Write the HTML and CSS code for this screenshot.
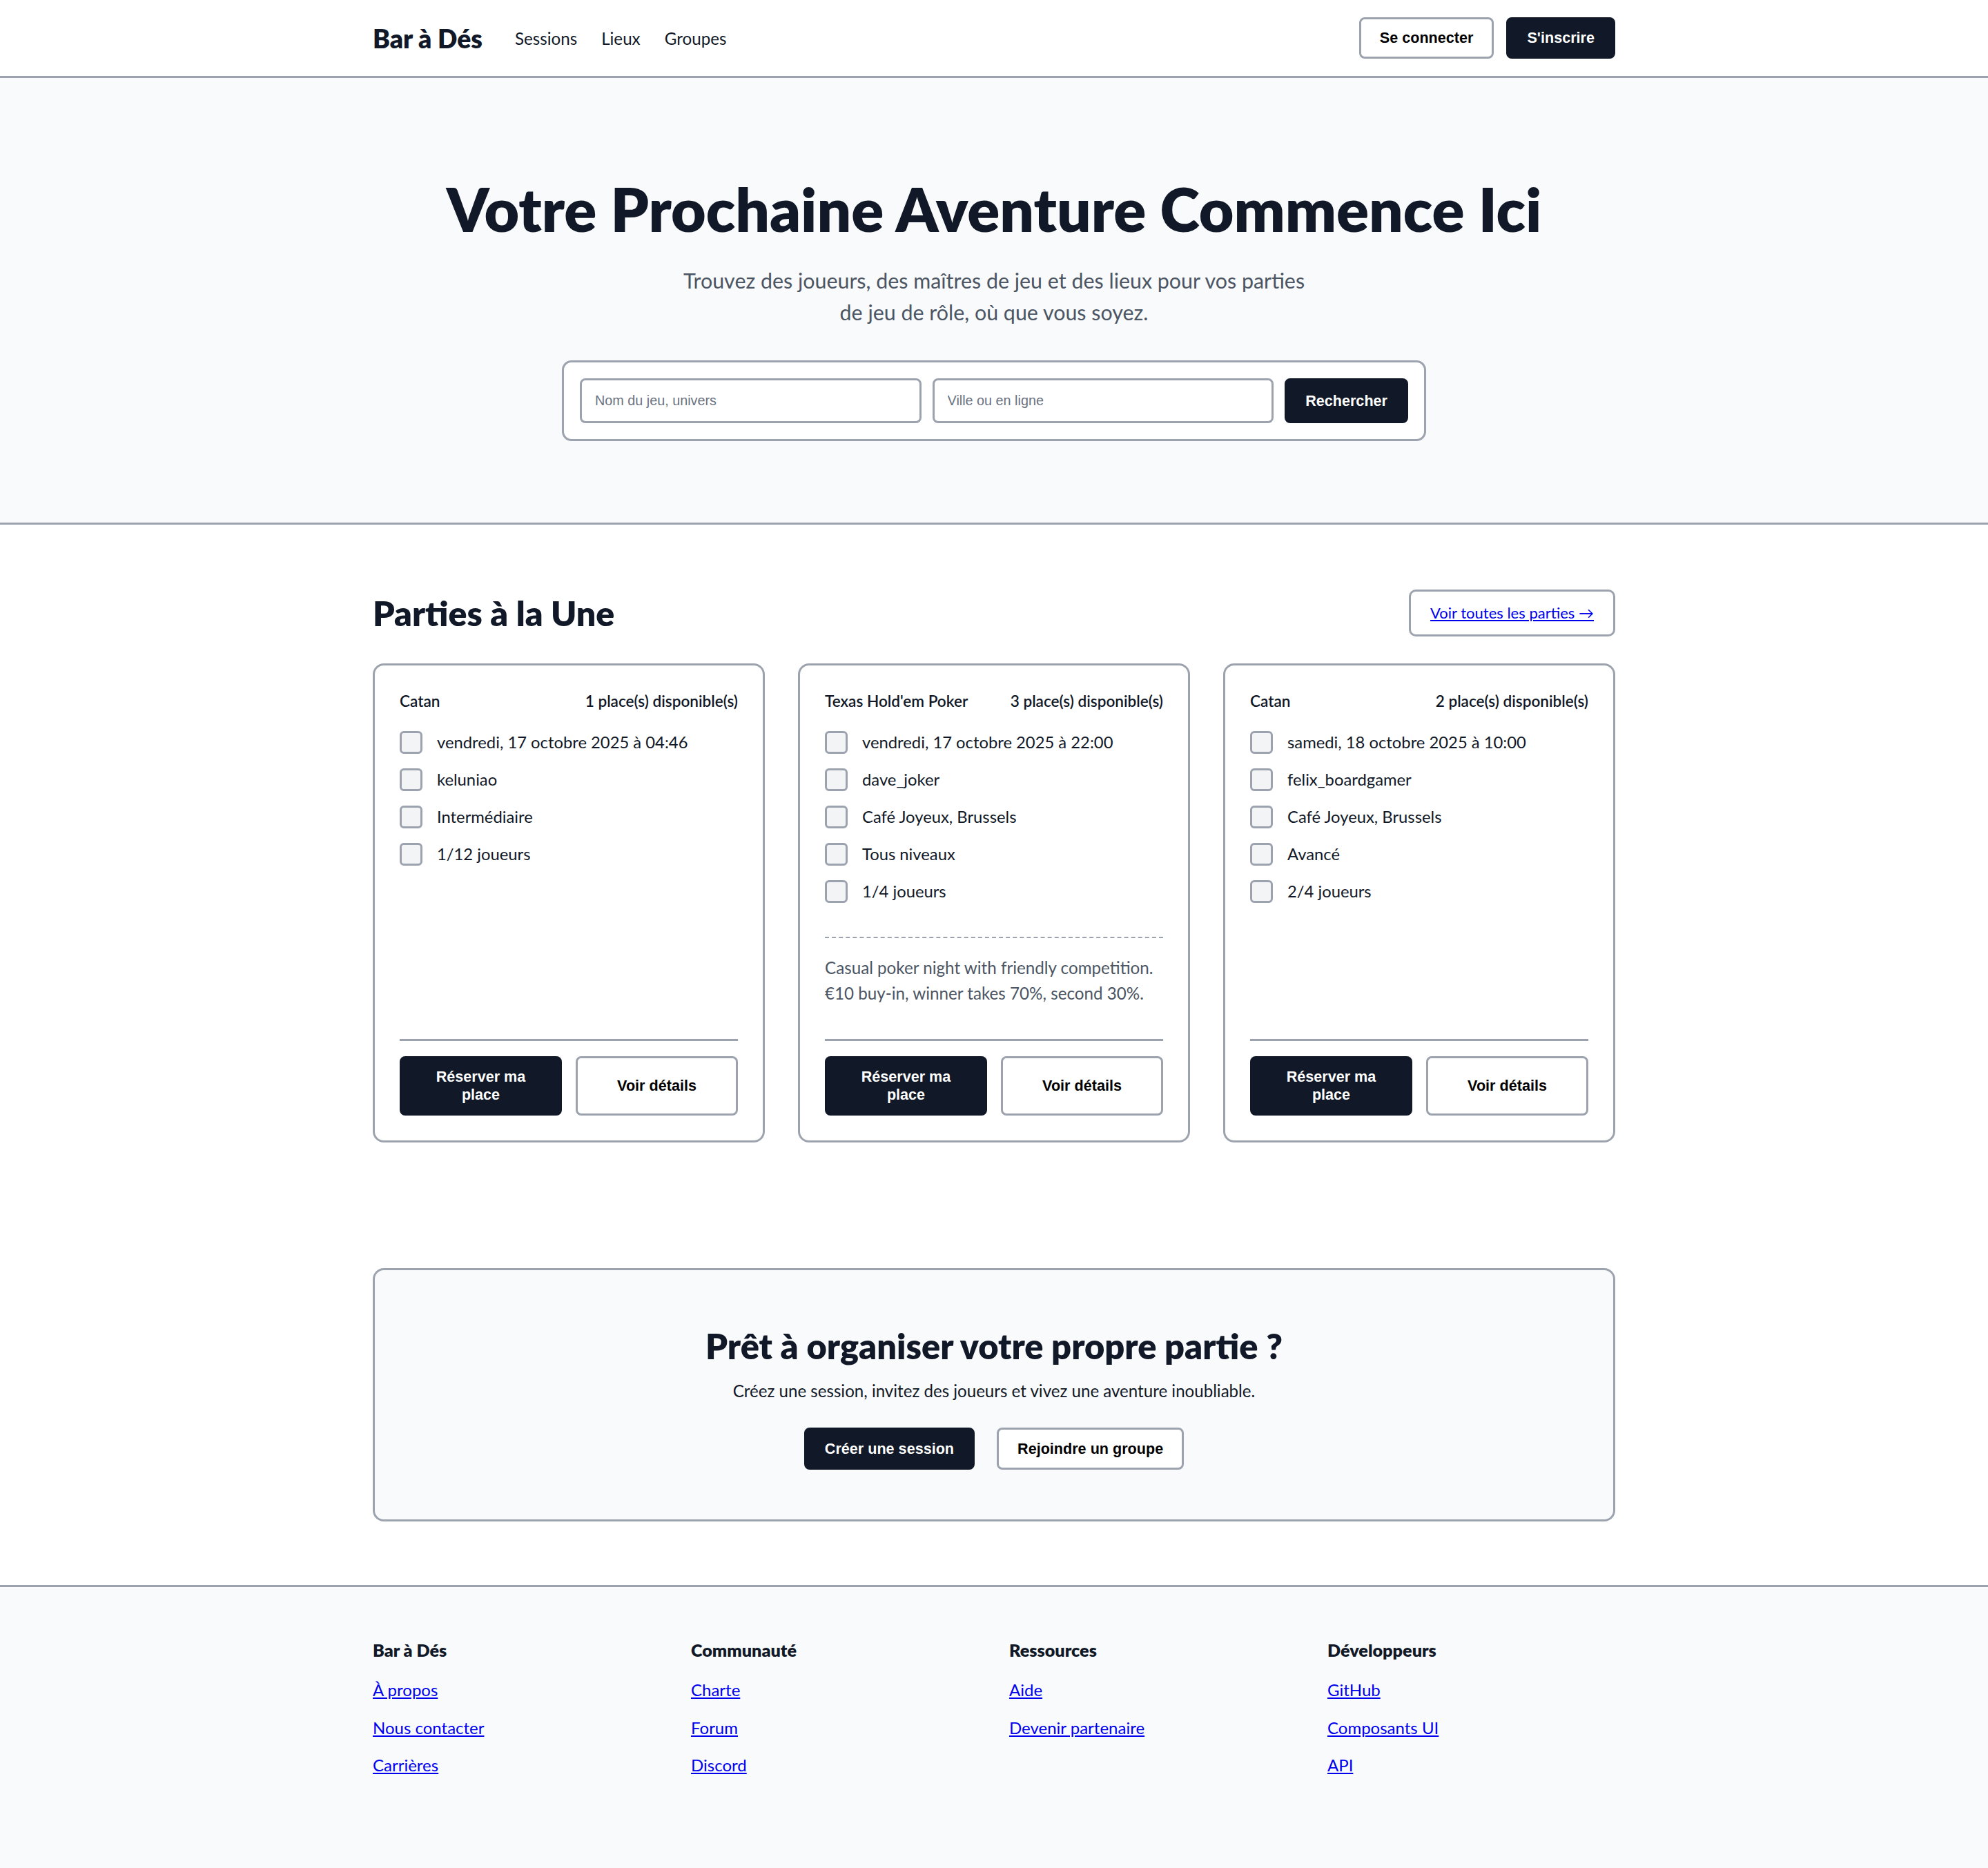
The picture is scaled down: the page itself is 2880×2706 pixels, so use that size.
FILE: index.html
```html
<!DOCTYPE html>
<html lang="fr">
<head>
<meta charset="utf-8">
<title>Bar à Dés</title>
<link rel="stylesheet" href="styles.css">
</head>
<body>
<header class="topbar">
  <div class="wrap topbar-inner">
    <div class="brand-nav">
      <a class="brand" href="#">Bar à Dés</a>
      <nav class="mainnav">
        <a href="#">Sessions</a>
        <a href="#">Lieux</a>
        <a href="#">Groupes</a>
      </nav>
    </div>
    <div class="auth">
      <button class="btn btn-outline" type="button">Se connecter</button>
      <button class="btn btn-dark" type="button">S'inscrire</button>
    </div>
  </div>
</header>

<section class="hero">
  <h1>Votre Prochaine Aventure Commence Ici</h1>
  <p class="lead">Trouvez des joueurs, des maîtres de jeu et des lieux pour vos parties de jeu de rôle, où que vous soyez.</p>
  <form class="search">
    <input type="text" placeholder="Nom du jeu, univers">
    <input type="text" placeholder="Ville ou en ligne">
    <button class="btn btn-dark" type="button">Rechercher</button>
  </form>
</section>

<main class="wrap featured">
  <div class="featured-head">
    <h2 class="section-title">Parties à la Une</h2>
    <div class="see-all"><a href="#">Voir toutes les parties →</a></div>
  </div>

  <div class="cards">
    <article class="card">
      <div class="card-body">
        <div class="card-head"><span>Catan</span><span>1 place(s) disponible(s)</span></div>
        <ul class="facts">
          <li><span class="box"></span>vendredi, 17 octobre 2025 à 04:46</li>
          <li><span class="box"></span>keluniao</li>
          <li><span class="box"></span>Intermédiaire</li>
          <li><span class="box"></span>1/12 joueurs</li>
        </ul>
      </div>
      <div class="card-foot">
        <button class="btn btn-dark" type="button">Réserver ma place</button>
        <button class="btn btn-outline" type="button">Voir détails</button>
      </div>
    </article>

    <article class="card">
      <div class="card-body">
        <div class="card-head"><span>Texas Hold'em Poker</span><span>3 place(s) disponible(s)</span></div>
        <ul class="facts">
          <li><span class="box"></span>vendredi, 17 octobre 2025 à 22:00</li>
          <li><span class="box"></span>dave_joker</li>
          <li><span class="box"></span>Café Joyeux, Brussels</li>
          <li><span class="box"></span>Tous niveaux</li>
          <li><span class="box"></span>1/4 joueurs</li>
        </ul>
        <p class="desc">Casual poker night with friendly competition. €10 buy-in, winner takes 70%, second 30%.</p>
      </div>
      <div class="card-foot">
        <button class="btn btn-dark" type="button">Réserver ma place</button>
        <button class="btn btn-outline" type="button">Voir détails</button>
      </div>
    </article>

    <article class="card">
      <div class="card-body">
        <div class="card-head"><span>Catan</span><span>2 place(s) disponible(s)</span></div>
        <ul class="facts">
          <li><span class="box"></span>samedi, 18 octobre 2025 à 10:00</li>
          <li><span class="box"></span>felix_boardgamer</li>
          <li><span class="box"></span>Café Joyeux, Brussels</li>
          <li><span class="box"></span>Avancé</li>
          <li><span class="box"></span>2/4 joueurs</li>
        </ul>
      </div>
      <div class="card-foot">
        <button class="btn btn-dark" type="button">Réserver ma place</button>
        <button class="btn btn-outline" type="button">Voir détails</button>
      </div>
    </article>
  </div>

  <section class="cta">
    <h2 class="cta-title">Prêt à organiser votre propre partie ?</h2>
    <p class="cta-text">Créez une session, invitez des joueurs et vivez une aventure inoubliable.</p>
    <div class="cta-actions">
      <button class="btn btn-dark" type="button">Créer une session</button>
      <button class="btn btn-outline" type="button">Rejoindre un groupe</button>
    </div>
  </section>
</main>

<footer class="footer">
  <div class="wrap footer-grid">
    <div class="fcol">
      <h3>Bar à Dés</h3>
      <a href="#">À propos</a>
      <a href="#">Nous contacter</a>
      <a href="#">Carrières</a>
    </div>
    <div class="fcol">
      <h3>Communauté</h3>
      <a href="#">Charte</a>
      <a href="#">Forum</a>
      <a href="#">Discord</a>
    </div>
    <div class="fcol">
      <h3>Ressources</h3>
      <a href="#">Aide</a>
      <a href="#">Devenir partenaire</a>
    </div>
    <div class="fcol">
      <h3>Développeurs</h3>
      <a href="#">GitHub</a>
      <a href="#">Composants UI</a>
      <a href="#">API</a>
    </div>
  </div>
</footer>
</body>
</html>
```

FILE: styles.css
```css
* { box-sizing: border-box; }

body {
  margin: 0;
  font-family: Lato, "Noto Sans", sans-serif;
  color: #111827;
  background: #ffffff;
}

.wrap {
  max-width: 1800px;
  margin: 0 auto;
}

/* ---------- top bar ---------- */
.topbar {
  background: #ffffff;
  border-bottom: 3px solid #9ca3af;
}
.topbar-inner {
  height: 110px;
  display: flex;
  align-items: center;
  justify-content: space-between;
}
.brand-nav {
  display: flex;
  align-items: center;
}
.brand {
  font-size: 37.3px;
  font-weight: 800;
  color: #111827;
  text-decoration: none;
}
.mainnav {
  display: flex;
  gap: 35px;
  margin-left: 47px;
}
.mainnav a {
  font-size: 24.2px;
  color: #111827;
  text-decoration: none;
}
.auth {
  display: flex;
  gap: 18px;
}

/* ---------- buttons ---------- */
.btn {
  font-family: "Liberation Sans", Arial, sans-serif;
  font-weight: 700;
  font-size: 21.6px;
  line-height: 26px;
  padding: 14px 27px;
  border: 3px solid #9ca3af;
  border-radius: 8px;
  cursor: pointer;
}
.btn-dark {
  background: #111827;
  border-color: #111827;
  color: #ffffff;
}
.btn-outline {
  background: #ffffff;
  color: #000000;
}

/* ---------- hero ---------- */
.hero {
  background: #f9fafb;
  border-bottom: 3px solid #9ca3af;
  text-align: center;
  padding: 137px 0 118px;
}
.hero h1 {
  margin: 0;
  font-size: 87.3px;
  line-height: 105px;
  font-weight: 800;
  color: #111827;
}
.lead {
  max-width: 920px;
  margin: 28px auto 0;
  font-size: 30.4px;
  line-height: 46px;
  color: #4b5563;
}
.search {
  width: 1252px;
  margin: 47px auto 0;
  padding: 23px;
  display: flex;
  gap: 16px;
  background: #ffffff;
  border: 3px solid #9ca3af;
  border-radius: 14px;
}
.search input {
  flex: 1;
  min-width: 0;
  height: 65px;
  padding: 0 19px;
  border: 3px solid #9ca3af;
  border-radius: 8px;
  background: #ffffff;
  font-family: "Liberation Sans", Arial, sans-serif;
  font-size: 19.8px;
  color: #111827;
}
.search input::placeholder {
  color: #6b7280;
}
.search .btn {
  flex: none;
}

/* ---------- featured ---------- */
.featured {
  padding: 94px 0 92px;
}
.featured-head {
  display: flex;
  align-items: center;
  justify-content: space-between;
}
.section-title {
  margin: 0;
  font-size: 50px;
  line-height: 62px;
  font-weight: 800;
}
.see-all {
  background: #ffffff;
  border: 3px solid #9ca3af;
  border-radius: 10px;
  padding: 14px 28px;
}
.see-all a {
  font-size: 22px;
  line-height: 34px;
  color: #0000ee;
}

.cards {
  margin-top: 39px;
  display: grid;
  grid-template-columns: repeat(3, 1fr);
  gap: 48px;
}
.card {
  display: flex;
  flex-direction: column;
  background: #ffffff;
  border: 3px solid #9ca3af;
  border-radius: 16px;
  padding: 36px;
}
.card-body {
  flex: 1;
  padding-bottom: 48px;
}
.card-head {
  display: flex;
  justify-content: space-between;
  font-size: 22.6px;
  line-height: 32px;
  font-weight: 600;
}
.facts {
  list-style: none;
  margin: 25px 0 0;
  padding: 0;
  display: flex;
  flex-direction: column;
  gap: 18px;
}
.facts li {
  display: flex;
  align-items: center;
  gap: 21px;
  font-size: 23.8px;
  line-height: 36px;
}
.box {
  flex: none;
  width: 33px;
  height: 33px;
  border: 3px solid #9ca3af;
  border-radius: 6px;
  background: #f3f4f6;
}
.desc {
  margin: 48px 0 0;
  padding-top: 24px;
  border-top: 2px dashed #9ca3af;
  font-size: 24.2px;
  line-height: 37px;
  color: #4b5563;
}
.card-foot {
  display: flex;
  gap: 20px;
  padding-top: 22px;
  border-top: 3px solid #9ca3af;
}
.card-foot .btn {
  flex: 1;
  padding: 14px 24px;
}

/* ---------- call to action ---------- */
.cta {
  margin-top: 182px;
  background: #f9fafb;
  border: 3px solid #9ca3af;
  border-radius: 16px;
  padding: 80px 40px 72px;
  text-align: center;
}
.cta-title {
  margin: 0;
  font-size: 50.5px;
  line-height: 60px;
  font-weight: 800;
}
.cta-text {
  margin: 17px 0 0;
  font-size: 24.1px;
  line-height: 36px;
}
.cta-actions {
  margin-top: 35px;
  display: flex;
  justify-content: center;
  gap: 32px;
}
.cta-actions .btn {
  padding: 14.5px 27px;
}

/* ---------- footer ---------- */
.footer {
  background: #f9fafb;
  border-top: 3px solid #9ca3af;
  padding: 74px 0 131px;
}
.footer-grid {
  display: grid;
  grid-template-columns: repeat(4, 1fr);
  gap: 44px;
}
.fcol {
  display: flex;
  flex-direction: column;
  align-items: flex-start;
  gap: 18.5px;
}
.fcol h3 {
  margin: 0 0 4.5px;
  font-size: 25.2px;
  line-height: 34px;
  font-weight: 800;
}
.fcol a {
  font-size: 24px;
  line-height: 36px;
  color: #0000ee;
}
```
